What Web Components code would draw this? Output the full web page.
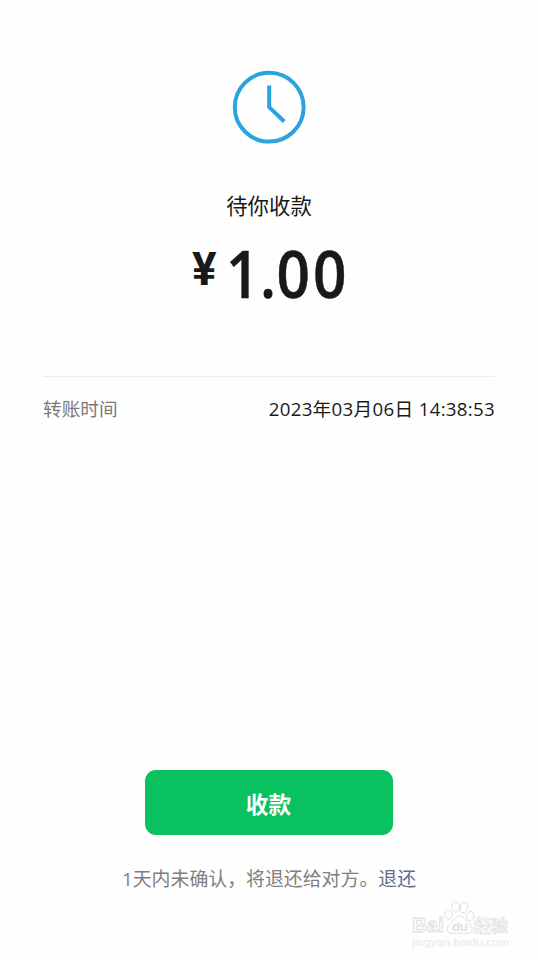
<!DOCTYPE html>
<html lang="zh-CN">
<head>
<meta charset="utf-8">
<title>待你收款</title>
<style>
    body {
        margin: 0;
        background: #fefefe;
        color: #191919;
        font-family: "Open Sans", "Noto Sans CJK SC", sans-serif;
    }
</style>
</head>
<body>

<transfer-page>
    <transfer-status slot="status" amount="1.00">待你收款</transfer-status>
    <detail-row slot="details" label="转账时间">2023年03月06日 14:38:53</detail-row>
    <accept-button slot="action">收款</accept-button>
    <refund-note slot="action" link="退还">1天内未确认，将退还给对方。</refund-note>
</transfer-page>

<script>
/// Full-height page with status on top, details below and actions at the bottom.
class TransferPage extends HTMLElement {

    constructor() {
        super()
        const shadow = this.attachShadow({mode: "open"})
        shadow.innerHTML = `
            <style>
                :host {
                    display: flex;
                    flex-direction: column;
                    position: relative;
                    box-sizing: border-box;
                    height: 960px;
                    padding: 70px 43px 67px;
                    overflow: hidden;
                }

                section {
                    margin-top: 67px;
                    border-top: 1px #ededed solid;
                    padding-top: 18px;
                }

                footer {
                    display: flex;
                    flex-direction: column;
                    align-items: center;
                    gap: 30px;
                    margin-top: auto;
                }

                site-mark {
                    position: absolute;
                    left: 410px;
                    top: 898px;
                }
            </style>
            <slot name="status"></slot>
            <section><slot name="details"></slot></section>
            <footer><slot name="action"></slot></footer>
            <site-mark></site-mark>
        `
    }

}

/// Clock icon, status text and the amount.
class TransferStatus extends HTMLElement {

    connectedCallback() {
        const shadow = this.attachShadow({mode: "open"})
        shadow.innerHTML = `
            <style>
                :host {
                    display: flex;
                    flex-direction: column;
                    align-items: center;
                }

                svg {
                    display: block;
                }

                .title {
                    margin-top: 47px;
                    font-size: 21.4px;
                    line-height: 30px;
                }

                .amount {
                    display: flex;
                    align-items: flex-start;
                    box-sizing: border-box;
                    width: 100%;
                    margin-top: 20px;
                    padding-left: 149px;
                    height: 68px;
                    font-weight: 600;
                    font-size: 65px;
                    line-height: 65px;
                }

                .currency {
                    width: 34px;
                    font-family: Roboto, sans-serif;
                    font-size: 46px;
                    font-weight: 700;
                    line-height: 56px;
                }

                .value {
                    transform: scaleX(.9);
                    transform-origin: left;
                    white-space: nowrap;
                    -webkit-text-stroke: .5px #191919;
                }

                .integer {
                    letter-spacing: .5px;
                }

                .fraction {
                    letter-spacing: 3.6px;
                }
            </style>
            <svg width="74" height="74" viewBox="0 0 74 74" fill="none" stroke="#2ba4dd" stroke-width="4">
                <circle cx="37.2" cy="37.2" r="34.4"/>
                <path d="M37.2 15.5V37.2L52.2 51.5"/>
            </svg>
            <div class="title"><slot></slot></div>
            <div class="amount">
                <span class="currency">¥</span>
                <span class="value"><span class="integer"></span><span class="fraction"></span></span>
            </div>
        `
        const [integer, fraction] = this.getAttribute("amount").split(".")
        shadow.querySelector(".integer").textContent = `${integer}.`
        shadow.querySelector(".fraction").textContent = fraction
    }

}

/// A label on the left with its value on the right.
class DetailRow extends HTMLElement {

    connectedCallback() {
        const shadow = this.attachShadow({mode: "open"})
        shadow.innerHTML = `
            <style>
                :host {
                    display: flex;
                    justify-content: space-between;
                    font-size: 18.7px;
                    line-height: 28px;
                }

                .label {
                    color: #7a7a7a;
                }

                .value {
                    letter-spacing: .3px;
                }
            </style>
            <span class="label"></span>
            <span class="value"><slot></slot></span>
        `
        shadow.querySelector(".label").textContent = this.getAttribute("label")
    }

}

class AcceptButton extends HTMLElement {

    constructor() {
        super()
        const shadow = this.attachShadow({mode: "open"})
        shadow.innerHTML = `
            <style>
                :host {
                    display: block;
                }

                button {
                    display: block;
                    width: 248px;
                    height: 65px;
                    margin: 0;
                    border: none;
                    border-radius: 11px;
                    padding: 2px 1px 0 0;
                    background: #0ac160;
                    color: white;
                    font: 700 22.7px/63px "Noto Sans CJK SC", sans-serif;
                }
            </style>
            <button><slot></slot></button>
        `
    }

}

/// Hint under the button, followed by a link.
class RefundNote extends HTMLElement {

    connectedCallback() {
        const shadow = this.attachShadow({mode: "open"})
        shadow.innerHTML = `
            <style>
                :host {
                    display: block;
                    color: #7f7f7f;
                    font-size: 18.9px;
                    line-height: 28px;
                    white-space: nowrap;
                }

                a {
                    color: #626d8c;
                }
            </style>
            <slot></slot><a></a>
        `
        shadow.querySelector("a").textContent = this.getAttribute("link")
    }

}

/// Faint outlined site logo with its address.
class SiteMark extends HTMLElement {

    constructor() {
        super()
        const shadow = this.attachShadow({mode: "open"})
        shadow.innerHTML = `
            <style>
                :host {
                    display: block;
                }

                svg {
                    display: block;
                    font-family: "Liberation Sans", "Noto Sans CJK SC", sans-serif;
                    font-weight: 700;
                }
            </style>
            <svg width="104" height="54" viewBox="0 0 104 54" fill="#fefefe" stroke="#dcdcdc" stroke-width=".9">
                <text x="2" y="34" font-size="21" textLength="32" lengthAdjust="spacingAndGlyphs">Bai</text>
                <ellipse cx="38.5" cy="16.5" rx="3.6" ry="4.6" transform="rotate(-15 38.5 16.5)"/>
                <ellipse cx="45.7" cy="9" rx="3.9" ry="5.2"/>
                <ellipse cx="54" cy="9.5" rx="3.9" ry="5.2" transform="rotate(12 54 9.5)"/>
                <ellipse cx="60.2" cy="18" rx="3.6" ry="4.6" transform="rotate(15 60.2 18)"/>
                <path d="M49.5 18C45 18 43.5 22.5 40.5 25.5C35.5 30 36.5 35.5 42 35.5C45 35.5 47 35 50 35S55 35.5 58 35.5C63.5 35 63.5 29.5 59 25.5C55.5 22.5 54 18 49.5 18Z"/>
                <text x="42" y="33" font-size="13.5" textLength="16" fill="#e0e0e0" stroke="none">du</text>
                <text x="64" y="34" font-size="17" textLength="34" stroke-width=".7">经验</text>
                <text x="2" y="47.5" font-size="10" textLength="97" lengthAdjust="spacingAndGlyphs" font-weight="400" fill="#e8e8e8" stroke="none">jingyan.baidu.com</text>
            </svg>
        `
    }

}

customElements.define("site-mark", SiteMark)
customElements.define("transfer-page", TransferPage)
customElements.define("transfer-status", TransferStatus)
customElements.define("detail-row", DetailRow)
customElements.define("accept-button", AcceptButton)
customElements.define("refund-note", RefundNote)
</script>
</body>
</html>
